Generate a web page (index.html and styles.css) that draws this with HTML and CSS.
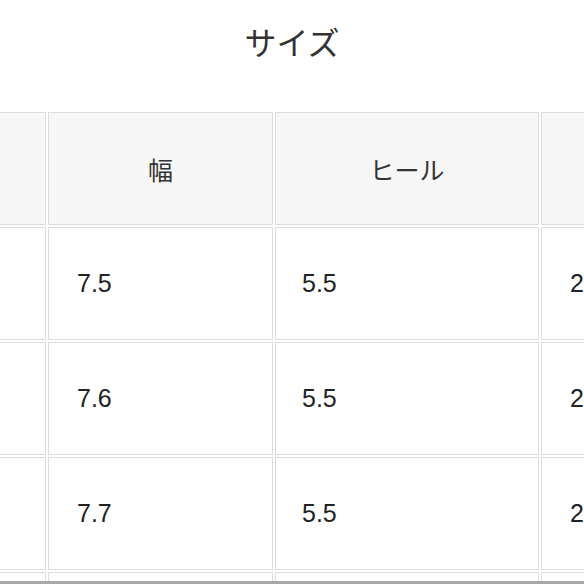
FILE: index.html
```html
<!DOCTYPE html>
<html lang="ja">
<head>
<meta charset="utf-8">
<link rel="stylesheet" href="styles.css">
</head>
<body>
<div class="page">
  <div class="title">サイズ</div>
  <table class="size-table">
    <colgroup>
      <col class="c1"><col class="c2"><col class="c3"><col class="c4">
    </colgroup>
    <thead>
      <tr>
        <th>サイズ</th>
        <th>幅</th>
        <th>ヒール</th>
        <th>長さ</th>
      </tr>
    </thead>
    <tbody>
      <tr><td>23.5</td><td>7.5</td><td class="mid">5.5</td><td>23.5</td></tr>
      <tr><td>24</td><td>7.6</td><td class="mid">5.5</td><td>24</td></tr>
      <tr><td>24.5</td><td>7.7</td><td class="mid">5.5</td><td>24.5</td></tr>
      <tr><td>25</td><td>7.8</td><td class="mid">5.5</td><td>25</td></tr>
    </tbody>
  </table>
</div>
<div class="bottom-bar"></div>
</body>
</html>
```
FILE: styles.css
```css
html, body {
  margin: 0;
  padding: 0;
  background: #ffffff;
}
body {
  width: 584px;
  height: 584px;
  overflow: hidden;
  font-family: "Liberation Sans", "Noto Sans CJK JP", sans-serif;
  color: #222222;
}
.page {
  width: 584px;
  height: 584px;
  overflow: hidden;
}
.title {
  height: 82px;
  display: flex;
  align-items: center;
  justify-content: center;
  font-family: "Noto Sans CJK JP", sans-serif;
  font-size: 32px;
  color: #333333;
}
.size-table {
  margin-top: 28px;
  margin-left: -156px;
  border-collapse: separate;
  border-spacing: 2px;
  table-layout: fixed;
  width: 899px;
}
.c1 { width: 200px; }
.c2 { width: 225px; }
.c3 { width: 264px; }
.c4 { width: 200px; }
.size-table th,
.size-table td {
  box-sizing: border-box;
  border: 1px solid #dcdcdc;
  height: 113px;
  vertical-align: middle;
  font-weight: 400;
  white-space: nowrap;
  overflow: hidden;
}
.size-table th {
  background: #f7f7f7;
  text-align: center;
  font-family: "Noto Sans CJK JP", sans-serif;
  font-size: 25px;
  color: #333333;
  padding: 0 8px;
}
.size-table td {
  background: #ffffff;
  text-align: left;
  font-size: 25px;
  padding: 0 0 0 28px;
}
.size-table td.mid {
  padding-left: 26px;
}
.size-table tr {
  height: 113px;
}
.bottom-bar {
  position: fixed;
  left: 0;
  right: 0;
  bottom: 0;
  height: 3px;
  background: #a8a8a8;
}
```
